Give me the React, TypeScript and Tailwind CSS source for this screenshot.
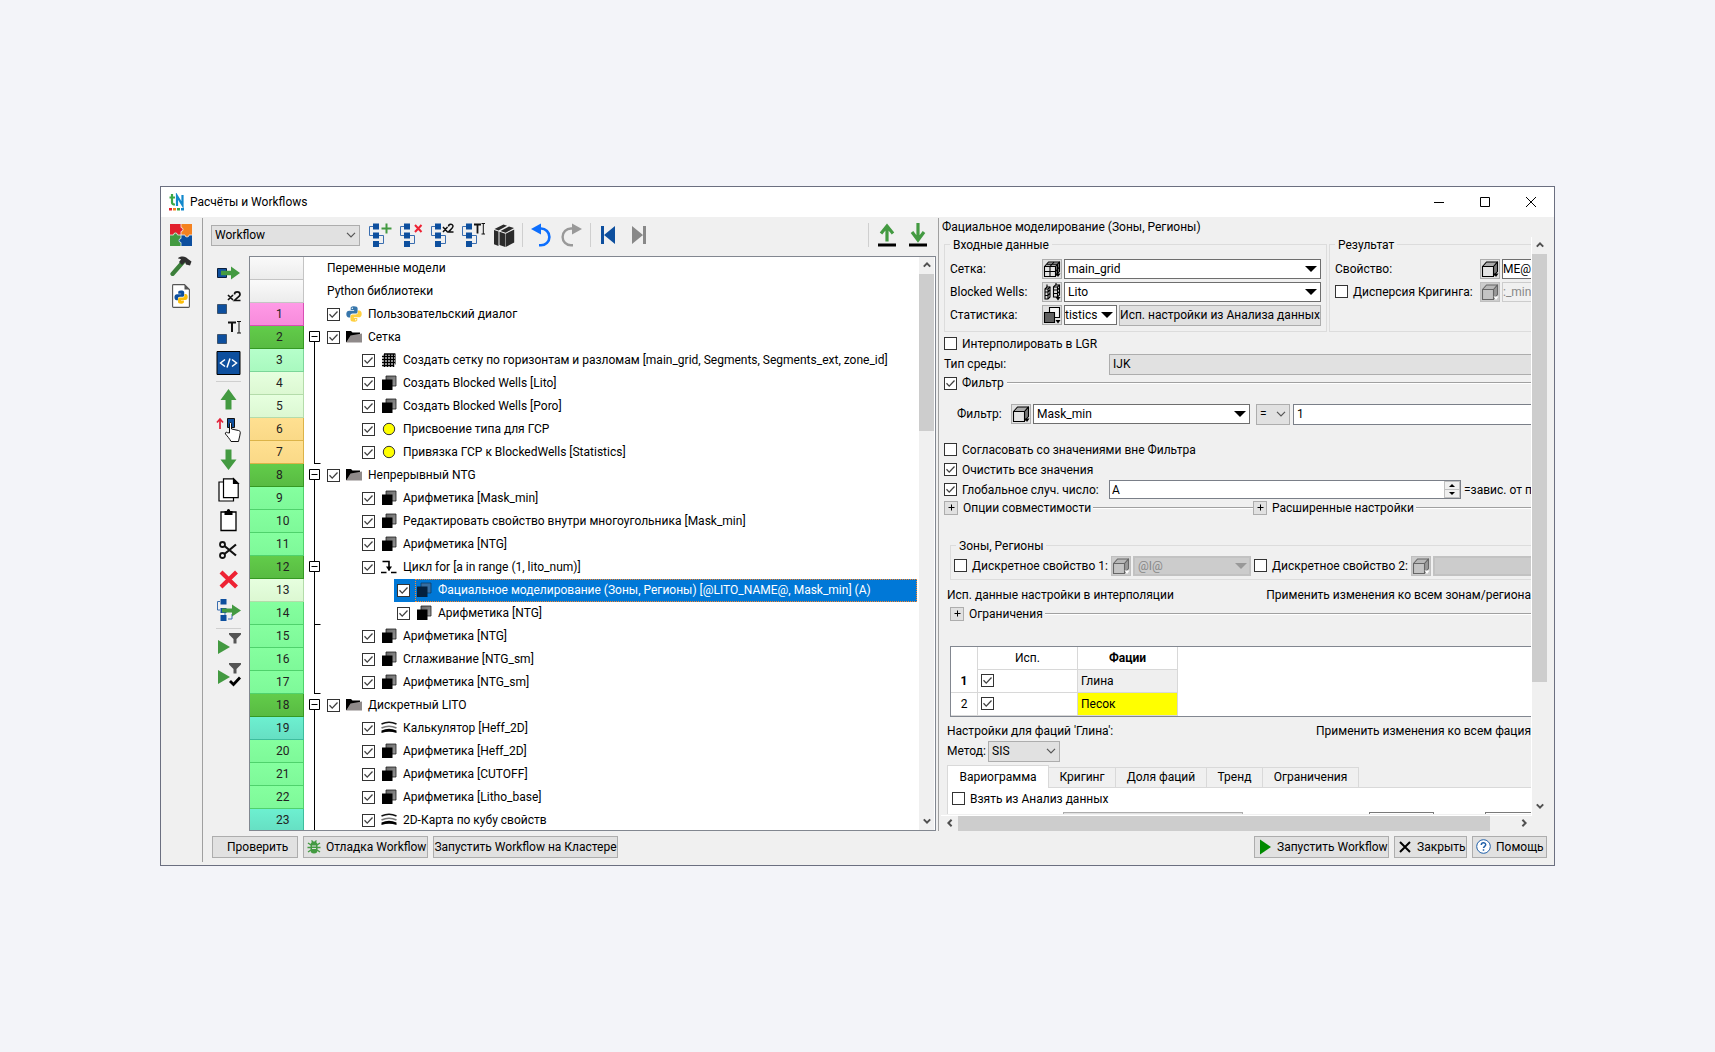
import React from "react";

type IconProps = { className?: string };

/* ---------- shared glyphs ---------- */

const Chevron = ({ className = "" }: IconProps) => (
  <svg viewBox="0 0 10 6" className={className} fill="none" stroke="#555" strokeWidth="1.2">
    <path d="M1 .8l4 4 4-4" />
  </svg>
);

const ScrollArrow = ({ d }: { d: string }) => (
  <svg viewBox="0 0 8 8" className="size-2" fill="none" stroke="#505050" strokeWidth="2">
    <path d={d} />
  </svg>
);
const UP = "M.8 5.6L4 2.4l3.2 3.2";
const DOWN = "M.8 2.4L4 5.6l3.2-3.2";
const LEFT = "M5.6 .8L2.4 4l3.2 3.2";
const RIGHT = "M2.4 .8L5.6 4 2.4 7.2";

function Check({ id, checked = false, label }: { id?: string; checked?: boolean; label?: string }) {
  return (
    <span className="grid size-[13px] shrink-0">
      <input
        id={id}
        type="checkbox"
        aria-label={label}
        defaultChecked={checked}
        className="peer col-start-1 row-start-1 size-[13px] appearance-none border border-[#333] bg-white"
      />
      <svg
        viewBox="0 0 13 13"
        className="pointer-events-none invisible col-start-1 row-start-1 size-[13px] peer-checked:visible"
        fill="none"
        stroke="#404040"
        strokeWidth="1.3"
      >
        <path d="M2.5 6.3l2.7 2.8 5.3-5.6" />
      </svg>
    </span>
  );
}

function CheckLabel({ id, checked, children }: { id: string; checked?: boolean; children: React.ReactNode }) {
  return (
    <span className="flex shrink-0 items-center gap-[5px]">
      <Check id={id} checked={checked} />
      <label htmlFor={id} className="whitespace-nowrap">
        {children}
      </label>
    </span>
  );
}

/* ---------- tree icons ---------- */

const Blocks = () => (
  <svg viewBox="0 0 16 16" className="size-4">
    <defs>
      <linearGradient id="blk" x1="0" y1="0" x2="1" y2="1">
        <stop offset="0" stopColor="#666" />
        <stop offset="1" stopColor="#999" />
      </linearGradient>
    </defs>
    <path d="M5 1h10v10H5z" fill="url(#blk)" stroke="#222" strokeWidth=".8" />
    <path d="M1 4.500h10.500V15H1z" fill="#000" />
  </svg>
);
const BlocksSelected = () => (
  <svg viewBox="0 0 16 16" className="size-4">
    <path d="M5 1h10v10H5z" fill="#376ea1" stroke="#0b3c68" strokeWidth=".8" />
    <path d="M1 4.500h10.500V15H1z" fill="#04213f" />
  </svg>
);
const Folder = () => (
  <svg viewBox="0 0 16 16" className="size-4">
    <path d="M0 2h5l1.500 1.500H14V13H0z" fill="#000" />
    <path d="M4.500 6.500L16 4.500v9H0z" fill="#8f8a8a" />
    <path d="M0 3v10l4-6.500z" fill="#000" />
  </svg>
);
const GridIcon = () => (
  <svg viewBox="0 0 16 16" className="size-4" stroke="#000" strokeWidth="1.5">
    <path d="M1 4.500h13M1 7.500h13M1 10.500h13M3.500 2v13M6.500 2v13M9.500 2v13M12.500 2v13M3 2h11M1 13.500h12" fill="none" />
    <path d="M14.500 1.500v11" stroke="#777" strokeWidth="1" />
  </svg>
);
const Dot = () => (
  <svg viewBox="0 0 16 16" className="size-4">
    <circle cx="8" cy="8" r="5.700" fill="#ffff00" stroke="#333" strokeWidth="1" />
  </svg>
);
const Loop = () => (
  <svg viewBox="0 0 16 16" className="size-4" fill="none" stroke="#000" strokeWidth="1.6">
    <path d="M1.500 2.500H8v9M0 13.500h5.500M10 13.500h5.500" />
    <path d="M5 7.500l3 4.500 3-4.500z" fill="#000" stroke="none" />
  </svg>
);
const Layers = () => (
  <svg viewBox="0 0 16 16" className="size-4" fill="none">
    <path d="M.5 4Q8 .5 15.500 4" stroke="#111" strokeWidth="1.400" />
    <path d="M.5 8Q8 4.500 15.500 8" stroke="#777" strokeWidth="1.700" />
    <path d="M.5 13V10.500Q8 7 15.500 10.500V13Q8 10.500 .5 13z" fill="#000" />
  </svg>
);
const Python = ({ className = "size-4" }: IconProps) => (
  <svg viewBox="0 0 16 16" className={className}>
    <path d="M7.900.3C5 .3 4.700 1.500 4.700 2.300v1.800h3.400v.6H3.200C1.500 4.700.3 5.900.3 8.100c0 2.300 1 3.500 2.600 3.500h1.400V9.700c0-1.300 1-2.200 2.200-2.200h3.300c1 0 1.800-.8 1.800-1.800V2.300C11.600 1 10.300.3 7.900.3z" fill="#3776ab" />
    <path d="M8.100 15.700c2.900 0 3.200-1.200 3.200-2v-1.800H7.900v-.6h4.900c1.700 0 2.900-1.200 2.900-3.400 0-2.300-1-3.500-2.600-3.500h-1.200v1.900c0 1.300-1 2.200-2.200 2.200H6.400c-1 0-1.900.8-1.900 1.800v3.400c0 1.300 1.200 2 3.600 2z" fill="#ffd040" />
    <circle cx="6.300" cy="2.300" r=".7" fill="#fff" />
    <circle cx="9.700" cy="13.700" r=".7" fill="#fff" />
  </svg>
);

/* ---------- toolbar icons ---------- */

const Flow = ({ children }: { children?: React.ReactNode }) => (
  <svg viewBox="0 0 24 24" className="size-6">
    <path d="M5 3.500H1.500v9H5M10 12.500h5.500v8h-2M6 3.500h4M6 12.500h4" fill="none" stroke="#3a6eb0" strokeWidth="1" />
    <path d="M5 .5h6v6H5zM5 9.500h6v6H5zM5 18h6v6H5z" fill="#0d4f9e" />
    <path d="M11 20.500h4" stroke="#3a6eb0" strokeWidth="1" />
    {children}
  </svg>
);
const FlowAdd = () => (
  <Flow>
    <path d="M18.500 .5v10M13.500 5.500h10" stroke="#439a41" strokeWidth="2" />
  </Flow>
);
const FlowDel = () => (
  <Flow>
    <path d="M16 2l6.500 7M22.500 2L16 9" stroke="#ee2233" strokeWidth="2" />
  </Flow>
);
const FlowX2 = () => (
  <Flow>
    <path d="M13 4l4.500 5M17.500 4L13 9M18.500 3.500C18.500.5 23 .5 23 3.300 23 5 20 7 18.500 9h5" fill="none" stroke="#111" strokeWidth="1.500" />
  </Flow>
);
const FlowRename = () => (
  <Flow>
    <path d="M13 1.500h7M16.500 1.500v9" stroke="#111" strokeWidth="1.800" />
    <path d="M20.500 .5h3.500M22.300 .5v10.500M20.500 11h3.500" stroke="#111" strokeWidth="1" />
  </Flow>
);
const Books = () => (
  <svg viewBox="0 0 24 24" className="size-6" fill="#2b2b2b">
    <path d="M2 7l4.500 1.500V23L2 21.300z" />
    <path d="M2.500 6l9-4.500 3.500 1.200L6.500 7.500z" />
    <path d="M7.500 8.800l5.800 1.900V24l-5.800-2z" />
    <path d="M8.500 8L17 3.500l5 1.500-8.300 4.700z" />
    <path d="M13.700 10.700L22.200 6.500v13L13.700 24z" />
  </svg>
);
const Undo = () => (
  <svg viewBox="0 0 24 24" className="size-6">
    <path d="M10 5.500h2a8.300 8.300 0 0 1 0 16.800h-2" fill="none" stroke="#0d6efd" strokeWidth="2.600" />
    <path d="M2 6L12 .5v11z" fill="#0d6efd" />
  </svg>
);
const Redo = () => (
  <svg viewBox="0 0 24 24" className="size-6">
    <path d="M13 5.500h-2a8.300 8.300 0 0 0 0 16.800h2" fill="none" stroke="#999" strokeWidth="2.400" />
    <path d="M22 6L12 .5v11z" fill="#999" />
  </svg>
);
const ToStart = () => (
  <svg viewBox="0 0 24 24" className="size-6" fill="#0d4f9e">
    <path d="M4 3h3v18H4zM18 3v18L7 12z" />
  </svg>
);
const ToEnd = () => (
  <svg viewBox="0 0 24 24" className="size-6" fill="#888">
    <path d="M15 3h3v18h-3zM4 3v18l11-9z" />
  </svg>
);
const Upload = () => (
  <svg viewBox="0 0 24 24" className="size-6">
    <path d="M12 18.500V3M6 10.500L12 3l6 7.500" fill="none" stroke="#439a41" strokeWidth="3.200" />
    <path d="M3 20.500h18v3H3z" />
  </svg>
);
const Download = () => (
  <svg viewBox="0 0 24 24" className="size-6">
    <path d="M12 0v16.500M6 9l6 8 6-8" fill="none" stroke="#439a41" strokeWidth="3.200" />
    <path d="M3 20.500h18v3H3z" />
  </svg>
);

/* ---------- side icons ---------- */

const side = "h-6 w-[27px] overflow-visible";
const BlockRight = () => (
  <svg viewBox="0 0 27 24" className={side}>
    <path d="M2.500 7.500h9v9h-9z" fill="#0d4f9e" stroke="#0a1e3c" />
    <path d="M6 9.800h10V5.500l9 6.500-9 6.500v-4.300H6z" fill="#439a41" />
  </svg>
);
const BlockX2 = () => (
  <svg viewBox="0 0 27 24" className={side}>
    <path d="M2.500 13.500h9v9h-9z" fill="#0d4f9e" stroke="#123" strokeWidth=".6" />
    <path d="M13 4l5 5M18 4l-5 5M19.500 3.500c0-3.400 5.500-3.400 5.500 0 0 2-4 4-5.500 6h6" fill="none" stroke="#111" strokeWidth="1.700" />
  </svg>
);
const BlockT = () => (
  <svg viewBox="0 0 27 24" className={side}>
    <path d="M2.500 13.500h9v9h-9z" fill="#0d4f9e" stroke="#123" strokeWidth=".6" />
    <path d="M13 1.500h8M17 1.500v9.500" stroke="#111" strokeWidth="2" />
    <path d="M22 .5h4M24 .5v11.500M22 12h4" stroke="#111" strokeWidth="1" />
  </svg>
);
const Code = () => (
  <svg viewBox="0 0 27 24" className={side}>
    <path d="M2 .5h23v23H2z" fill="#0d4f9e" stroke="#000" />
    <path d="M10 8.500L5.500 12l4.500 3.500M17 8.500l4.500 3.500-4.500 3.500M15 7.500l-3 9" fill="none" stroke="#fff" strokeWidth="1.500" />
  </svg>
);
const ArrowUp = () => (
  <svg viewBox="0 0 27 24" className={side} fill="#439a41">
    <path d="M13.500 1L21.500 12h-5v9.500h-6V12h-5z" />
  </svg>
);
const ArrowDown = () => (
  <svg viewBox="0 0 27 24" className={side} fill="#439a41">
    <path d="M13.500 22L21.500 11.500h-5V1.500h-6v10h-5z" />
  </svg>
);
const Hand = () => (
  <svg viewBox="0 0 27 24" className={side}>
    <path d="M12.500.5h7v9h-7z" fill="#0d4f9e" stroke="#111" />
    <path d="M5 11V1M2 4.500L5 1l3 3.500" fill="none" stroke="#e2233a" strokeWidth="1.700" />
    <path d="M14.500 15V5.500c0-1.300 2-1.300 2 0V11l7 1.500c1.300.3 1.800 1 1.800 2.200 0 2.500-1 4-1.300 6.300l-.5 2.500h-7.500c-1.500-3-3.500-5-5.500-7.500-.8-1.500 1-2.300 2-1.300z" fill="#fff" stroke="#111" />
  </svg>
);
const Copy = () => (
  <svg viewBox="0 0 27 24" className={side} fill="#fff" stroke="#000" strokeWidth="1.200">
    <path d="M4 4h14.500v19H4z" />
    <path d="M8.500 .8h10l4.700 4.700v14.200H8.500z" />
    <path d="M18.500 .8v4.700h4.700z" fill="#000" />
  </svg>
);
const Paste = () => (
  <svg viewBox="0 0 27 24" className={side}>
    <path d="M6 4h15v18.500H6z" fill="#fff" stroke="#000" strokeWidth="1.300" />
    <path d="M9.500 3h2.300c.2-2.700 3.200-2.700 3.400 0h2.300v4h-8z" />
  </svg>
);
const Scissors = () => (
  <svg viewBox="0 0 27 24" className={side} fill="none" stroke="#111" strokeWidth="1.800">
    <circle cx="7.500" cy="6.500" r="2.500" />
    <circle cx="7.500" cy="17.500" r="2.500" />
    <path d="M9.500 8L21 17.500M9.500 16L21 6.500" strokeWidth="2.200" />
  </svg>
);
const Remove = () => (
  <svg viewBox="0 0 27 24" className={side}>
    <path d="M6 4l15.500 15M21.500 4L6 19" stroke="#ee2233" strokeWidth="4.200" />
  </svg>
);
const FlowRight = () => (
  <svg viewBox="0 0 27 24" className={side}>
    <path d="M5 3.500H2.500v8.500H5M10 12.500v6M13 21h4v-5" fill="none" stroke="#3a6eb0" />
    <path d="M5.500 1h6v5.500h-6zM5.500 10h6v5h-6zM5.500 17h6v6h-6z" fill="#0d4f9e" />
    <path d="M7 10.500h10V6.500l9 6-9 6v-4H7z" fill="#439a41" />
  </svg>
);
const PlayFilter = () => (
  <svg viewBox="0 3 27 24" className={side}>
    <path d="M3 8l12 7-12 7z" fill="#439a41" />
    <path d="M14 1h12v1.500L21.500 7v4.500h-3V7L14 2.500z" fill="#555" />
  </svg>
);
const PlayFilterCheck = () => (
  <svg viewBox="0 2 27 24" className={side}>
    <path d="M3 7l12 7-12 7z" fill="#439a41" />
    <path d="M14 0h12v1.500L21.500 6v4.500h-3V6L14 1.500z" fill="#555" />
    <path d="M15 18l3.500 3.500 6.500-7" fill="none" stroke="#000" strokeWidth="2.800" />
  </svg>
);

/* ---------- left strip icons ---------- */

const Puzzle = () => (
  <svg viewBox="0 0 22 22" className="size-[22px]">
    <path d="M0 0h11v11H0z" fill="#e2202c" />
    <path d="M11 0h11v11H11z" fill="#f58220" />
    <path d="M0 11h11v11H0z" fill="#439a41" />
    <path d="M11 11h11v11H11z" fill="#0d4f9e" />
    <path d="M10 3.500h1a2 2 0 1 1 0 4h-1z" fill="#e2202c" />
    <path d="M15 10v1a2 2 0 1 0 4 0v-1z" fill="#f58220" />
    <path d="M3.500 12v-1.500a2 2 0 1 1 4 0V12z" fill="#439a41" />
    <path d="M12 14.500h-1.500a2 2 0 1 0 0 4H12z" fill="#0d4f9e" />
    <path d="M11 0v3.500a2 2 0 1 1 0 4V11M11 11v3.500a2 2 0 1 0 0 4V22M0 11h3.500a2 2 0 1 1 4 0H15a2 2 0 1 0 4 0h3" fill="none" stroke="#efefef" strokeWidth=".8" />
  </svg>
);
const Hammer = () => (
  <svg viewBox="0 0 22 20" className="h-5 w-[22px]">
    <path d="M13 6L2.500 18" stroke="#3c7f3a" strokeWidth="4.200" strokeLinecap="round" />
    <path d="M8 2C12-.5 16 .5 18 3l3.500 2.500-1.500 4-4-1-1-2.500-3 3-3-3 2-2.500c-1-1-2-1-3-1z" fill="#2f2f2f" />
  </svg>
);
const PyDoc = () => (
  <svg viewBox="0 0 18 24" className="h-6 w-[18px]">
    <path d="M.6 1.500q0-.9.9-.9h11L17.400 5.500v17q0 .9-.9.900h-15q-.9 0-.9-.9z" fill="#fff" stroke="#555" strokeWidth="1.100" />
    <path d="M12.500 .6v4.900h4.900z" fill="#555" />
    <g transform="translate(2.200 6.300) scale(.86)">
      <path d="M7.900.3C5 .3 4.700 1.500 4.700 2.300v1.800h3.400v.6H3.200C1.500 4.700.3 5.900.3 8.100c0 2.300 1 3.500 2.600 3.500h1.400V9.700c0-1.300 1-2.200 2.200-2.200h3.300c1 0 1.800-.8 1.800-1.800V2.300C11.600 1 10.300.3 7.900.3z" fill="#0d4f9e" />
      <path d="M8.100 15.700c2.900 0 3.200-1.200 3.200-2v-1.800H7.900v-.6h4.900c1.700 0 2.900-1.200 2.900-3.400 0-2.300-1-3.500-2.600-3.500h-1.200v1.900c0 1.300-1 2.200-2.200 2.200H6.400c-1 0-1.900.8-1.900 1.800v3.400c0 1.300 1.200 2 3.600 2z" fill="#fcbf0a" />
    </g>
  </svg>
);
const Logo = () => (
  <svg viewBox="0 0 16 18" className="h-[18px] w-4">
    <path d="M3 1v8.500q0 2 3 2M.5 4.500H6" fill="none" stroke="#3aa845" strokeWidth="2.200" />
    <path d="M8 13V3l5.500 9V2" fill="none" stroke="#1188cc" strokeWidth="2.200" />
    <path d="M0 15h3v2.500H0z" fill="#e2202c" />
    <path d="M4 15h3v2.500H4z" fill="#f58220" />
    <path d="M8 15h3v2.500H8z" fill="#3aa845" />
    <path d="M12 15h3v2.500h-3z" fill="#1188cc" />
  </svg>
);

/* ---------- form icons ---------- */

function Cube({ muted = false, grid = false }: { muted?: boolean; grid?: boolean }) {
  const line = muted ? "#666" : "#000";
  return (
    <svg viewBox="0 0 18 18" className="size-[18px]" stroke={line} strokeWidth="1.100" strokeLinejoin="round">
      <path d="M1.500 6.500l4-4.500h11l-3.500 4.500z" fill={muted ? "#b8b8b8" : "#aaa"} />
      <path d="M12.500 6.500l4-4.500v9.500l-4 4.500z" fill={muted ? "#999" : "#777"} />
      <path d="M1.500 6.500h11v10h-11z" fill={muted ? "#c4c4c4" : "#e4e4e4"} />
      {grid && <path d="M7 6.500v10M1.500 11.500h11M7 6.500l4-4.500M14.500 4.500V14M4 4.300h10.500M12.500 11.500l4-4.500" fill="none" />}
      <path d="M12.500 13.500h5l-2.500 3.500z" fill={muted ? "#fff" : "#000"} stroke="none" />
    </svg>
  );
}
const Wells = () => (
  <svg viewBox="0 0 18 18" className="size-[18px]" fill="#ddd" stroke="#000" strokeWidth="1.100">
    <path d="M2 6l2-2h3v10l-2 2H2zM10.500 4l2-2h4v10l-2 2h-4z" />
    <path d="M2 9h3l2-2M2 12.500h3l2-2M5 6v10M2 6h3l2-2M10.500 7h4l2-2M10.500 10.500h4l2-2M14.500 4v10M10.500 4h4l2-2M4 4V1.500M13 2V0" fill="none" />
    <path d="M12.500 14h5L15 17.500z" fill="#000" stroke="none" />
  </svg>
);
const Stats = () => (
  <svg viewBox="0 0 18 18" className="size-[18px]" stroke="#000" strokeWidth="1.100">
    <path d="M6.500 1.500h10v10h-10z" fill="#f4f4f4" />
    <path d="M1.500 6.500h10v10h-10z" fill="#606060" />
    <path d="M12.500 14h5L15 17.500z" fill="#000" stroke="none" />
  </svg>
);

/* ---------- form controls ---------- */

function IconButton({ label, muted, children }: { label: string; muted?: boolean; children: React.ReactNode }) {
  return (
    <button
      type="button"
      aria-label={label}
      disabled={muted}
      className="grid size-5 shrink-0 place-items-center border border-[#adadad] bg-[#e1e1e1] disabled:border-[#bfbfbf] disabled:bg-[#cccccc]"
    >
      {children}
    </button>
  );
}

type DarkSelectProps = { label: string; value: string; className: string; muted?: boolean; pad?: string };

function DarkSelect({ label, value, className, muted, pad = "px-[3px]" }: DarkSelectProps) {
  return (
    <span className={`grid ${className}`}>
      <select
        aria-label={label}
        disabled={muted}
        className={`col-start-1 row-start-1 h-5 w-full appearance-none border border-[#6e6e6e] bg-white disabled:border-2 disabled:border-[#c2c2c2] disabled:bg-[#cccccc] disabled:text-[#888] disabled:opacity-100 ${pad}`}
      >
        <option>{value}</option>
      </select>
      <svg viewBox="0 0 12 6" className="pointer-events-none col-start-1 row-start-1 mr-1 h-1.5 w-3 self-center justify-self-end">
        <path d="M0 0h12L6 6z" fill={muted ? "#999" : "#000"} />
      </svg>
    </span>
  );
}

function PlainSelect({ label, value, className, chevron = true }: { label: string; value: string; className: string; chevron?: boolean }) {
  return (
    <span className={`grid ${className}`}>
      <select
        aria-label={label}
        className="col-start-1 row-start-1 h-[21px] w-full appearance-none border border-[#adadad] bg-[#e1e1e1] px-[3px]"
      >
        <option>{value}</option>
      </select>
      {chevron && <Chevron className="pointer-events-none col-start-1 row-start-1 mr-1 h-1.5 w-2.5 self-center justify-self-end" />}
    </span>
  );
}

function Expander({ title }: { title: string }) {
  return (
    <span className="flex shrink-0 items-center gap-[5px]">
      <button type="button" aria-label={`Развернуть: ${title}`} className="grid size-3.5 place-items-center border border-[#adadad] bg-[#e1e1e1]">
        <svg viewBox="0 0 7 7" className="size-[7px]" stroke="#000">
          <path d="M3.500 .5v6M.5 3.500h6" />
        </svg>
      </button>
      <span className="whitespace-nowrap">{title}</span>
    </span>
  );
}

const Rule = () => <span className="h-0.5 flex-1 border-t border-b border-t-[#a0a0a0] border-b-white" />;

/* ---------- workflow tree ---------- */

const tone = {
  none: "border-[#c4c4c4] bg-linear-to-b from-[#fafafa] to-[#ececec]",
  pink: "border-[#d84fb4] bg-linear-to-b from-[#ff9ae6] to-[#f78bdc]",
  dark: "border-[#359a22] bg-linear-to-b from-[#62cc4a] to-[#58bb42]",
  mint: "border-[#7bd699] bg-linear-to-b from-[#b6ffca] to-[#a9f9bf]",
  pale: "border-[#b4dcaa] bg-linear-to-b from-[#e6ffdf] to-[#dcf8d2]",
  gold: "border-[#dcb348] bg-linear-to-b from-[#ffe091] to-[#fad987]",
  green: "border-[#4fd26c] bg-linear-to-b from-[#85ff9f] to-[#7ef999]",
  teal: "border-[#3dbd9d] bg-linear-to-b from-[#6df0d0] to-[#66dfc3]",
};
const icons = { py: Python, folder: Folder, grid: GridIcon, block: Blocks, dot: Dot, loop: Loop, layers: Layers, sel: BlocksSelected };
const indent = ["pl-[1px]", "pl-9", "pl-[71px]"];

type Row = { tone: keyof typeof tone; level: number; icon: keyof typeof icons; text: string; gutter?: "first" | "line" | "end" | "box" };

const rows: Row[] = [
  { tone: "pink", level: 0, icon: "py", text: "Пользовательский диалог" },
  { tone: "dark", level: 0, icon: "folder", text: "Сетка", gutter: "first" },
  { tone: "mint", level: 1, icon: "grid", text: "Создать сетку по горизонтам и разломам [main_grid, Segments, Segments_ext, zone_id]", gutter: "line" },
  { tone: "pale", level: 1, icon: "block", text: "Создать Blocked Wells [Lito]", gutter: "line" },
  { tone: "pale", level: 1, icon: "block", text: "Создать Blocked Wells [Poro]", gutter: "line" },
  { tone: "gold", level: 1, icon: "dot", text: "Присвоение типа для ГСР", gutter: "line" },
  { tone: "gold", level: 1, icon: "dot", text: "Привязка ГСР к BlockedWells [Statistics]", gutter: "end" },
  { tone: "dark", level: 0, icon: "folder", text: "Непрерывный NTG", gutter: "first" },
  { tone: "green", level: 1, icon: "block", text: "Арифметика [Mask_min]", gutter: "line" },
  { tone: "green", level: 1, icon: "block", text: "Редактировать свойство внутри многоугольника [Mask_min]", gutter: "line" },
  { tone: "green", level: 1, icon: "block", text: "Арифметика [NTG]", gutter: "line" },
  { tone: "dark", level: 1, icon: "loop", text: "Цикл for [a in range (1, lito_num)]", gutter: "box" },
  { tone: "pale", level: 2, icon: "sel", text: "Фациальное моделирование (Зоны, Регионы) [@LITO_NAME@, Mask_min] (A)", gutter: "line" },
  { tone: "green", level: 2, icon: "block", text: "Арифметика [NTG]", gutter: "end" },
  { tone: "green", level: 1, icon: "block", text: "Арифметика [NTG]", gutter: "line" },
  { tone: "green", level: 1, icon: "block", text: "Сглаживание [NTG_sm]", gutter: "line" },
  { tone: "green", level: 1, icon: "block", text: "Арифметика [NTG_sm]", gutter: "end" },
  { tone: "dark", level: 0, icon: "folder", text: "Дискретный LITO", gutter: "first" },
  { tone: "teal", level: 1, icon: "layers", text: "Калькулятор [Heff_2D]", gutter: "line" },
  { tone: "green", level: 1, icon: "block", text: "Арифметика [Heff_2D]", gutter: "line" },
  { tone: "green", level: 1, icon: "block", text: "Арифметика [CUTOFF]", gutter: "line" },
  { tone: "green", level: 1, icon: "block", text: "Арифметика [Litho_base]", gutter: "line" },
  { tone: "teal", level: 1, icon: "layers", text: "2D-Карта по кубу свойств", gutter: "line" },
];

function Gutter({ kind }: { kind?: Row["gutter"] }) {
  return (
    <svg viewBox="0 0 22 23" className="h-[23px] w-[22px] shrink-0" fill="none" stroke="#000">
      {kind && kind !== "first" && <path d="M10.500 0v23" />}
      {kind === "first" && <path d="M10.500 12v11" />}
      {kind === "end" && <path d="M10.500 22.500h6" />}
      {(kind === "first" || kind === "box") && (
        <>
          <path d="M5.500 5.500h10v10h-10z" fill="#fff" />
          <path d="M7.500 10.500h6" />
        </>
      )}
    </svg>
  );
}

const numberCell = "flex h-[23px] w-[54px] shrink-0 items-center border-r border-b pl-[26px] text-[#222]";

function Tree() {
  return (
    <div className="flex min-w-0 flex-1 overflow-hidden border border-[#828790] bg-white">
      <div className="-mb-0.5 min-w-0 flex-1">
        {["Переменные модели", "Python библиотеки"].map((t) => (
          <div key={t} className="flex items-center">
            <span className={`${numberCell} ${tone.none}`} />
            <span className="pl-[23px]">{t}</span>
          </div>
        ))}
        {rows.map((r, i) => {
          const Icon = icons[r.icon];
          const selected = r.icon === "sel";
          const id = `step-${i + 1}`;
          return (
            <div key={id} className="flex items-center">
              <span className={`${numberCell} ${tone[r.tone]}`}>{i + 1}</span>
              <Gutter kind={r.gutter} />
              <div className={`flex min-w-0 flex-1 items-center ${selected ? "pl-[68px]" : indent[r.level]}`}>
                <div className={`flex h-[23px] min-w-0 flex-1 items-center ${selected ? "bg-[#0078d7] pl-[3px] text-white" : ""}`}>
                  <Check id={id} checked />
                  <div className={`ml-[5px] flex h-[23px] min-w-0 flex-1 items-center gap-1.5 border border-dotted ${selected ? "border-[#ff8728]" : "border-transparent"}`}>
                    <Icon />
                    <label htmlFor={id} className="whitespace-nowrap">
                      {r.text}
                    </label>
                  </div>
                </div>
              </div>
            </div>
          );
        })}
      </div>
      <div className="ml-0.5 mr-px flex w-[15px] shrink-0 flex-col bg-[#f0f0f0]">
        <span className="grid h-[17px] place-items-center">
          <ScrollArrow d={UP} />
        </span>
        <span className="h-[157px] bg-[#cdcdcd]" />
        <span className="mt-auto grid h-[17px] place-items-center">
          <ScrollArrow d={DOWN} />
        </span>
      </div>
    </div>
  );
}

/* ---------- toolbars ---------- */

const Tool = ({ label, icon: Icon }: { label: string; icon: React.FC }) => (
  <button type="button" aria-label={label} className="grid shrink-0 place-items-center">
    <Icon />
  </button>
);
const VSep = () => <span className="-mx-px h-6 w-px bg-[#cfcfcf]" />;
const HSep = () => <span className="h-px w-[25px] shrink-0 bg-[#cfcfcf]" />;

const TopBar = () => (
  <div className="flex h-[39px] items-center px-2 pb-0.5">
    <PlainSelect label="Режим" value="Workflow" className="mr-2 w-[149px] shrink-0" />
    <div className="flex items-center gap-[7px]">
      <Tool label="Добавить" icon={FlowAdd} />
      <Tool label="Удалить" icon={FlowDel} />
      <Tool label="Дублировать" icon={FlowX2} />
      <Tool label="Переименовать" icon={FlowRename} />
      <Tool label="Библиотека" icon={Books} />
      <VSep />
      <Tool label="Отменить" icon={Undo} />
      <Tool label="Повторить" icon={Redo} />
      <VSep />
      <Tool label="В начало" icon={ToStart} />
      <Tool label="В конец" icon={ToEnd} />
    </div>
    <div className="ml-auto flex items-center gap-[7px]">
      <VSep />
      <Tool label="Выгрузить" icon={Upload} />
      <Tool label="Загрузить" icon={Download} />
    </div>
  </div>
);

const SideBar = () => (
  <div className="flex w-[46px] shrink-0 flex-col items-center gap-1.5 pt-[5px] pl-1">
    <Tool label="Вставить расчёт" icon={BlockRight} />
    <Tool label="Дублировать расчёт" icon={BlockX2} />
    <Tool label="Переименовать расчёт" icon={BlockT} />
    <Tool label="Показать код" icon={Code} />
    <HSep />
    <Tool label="Вверх" icon={ArrowUp} />
    <Tool label="Переместить" icon={Hand} />
    <Tool label="Вниз" icon={ArrowDown} />
    <Tool label="Копировать" icon={Copy} />
    <Tool label="Вставить" icon={Paste} />
    <Tool label="Вырезать" icon={Scissors} />
    <Tool label="Удалить расчёт" icon={Remove} />
    <Tool label="Экспорт" icon={FlowRight} />
    <HSep />
    <Tool label="Запустить от фильтра" icon={PlayFilter} />
    <Tool label="Запустить выбранные" icon={PlayFilterCheck} />
  </div>
);

/* ---------- settings panel ---------- */

const FIELDSET = "border border-[#dcdcdc]";
const LEGEND = "h-4 px-[3px] leading-4";

const Inputs = () => (
  <div className="ml-[3px] flex gap-0.5">
    <fieldset className={`${FIELDSET} w-[383px] min-w-0 shrink-0 px-[5px] pb-[5px]`}>
      <legend className={LEGEND}>Входные данные</legend>
      <div className="grid grid-cols-[92px_minmax(0,1fr)] items-center gap-y-[3px] pt-1.5">
        <span>Сетка:</span>
        <span className="flex gap-0.5">
          <IconButton label="Выбрать сетку">
            <Cube grid />
          </IconButton>
          <DarkSelect label="Сетка" value="main_grid" className="flex-1" />
        </span>
        <span>Blocked Wells:</span>
        <span className="flex gap-0.5">
          <IconButton label="Выбрать Blocked Wells">
            <Wells />
          </IconButton>
          <DarkSelect label="Blocked Wells" value="Lito" className="flex-1" />
        </span>
        <span>Статистика:</span>
        <span className="flex gap-0.5">
          <IconButton label="Выбрать статистику">
            <Stats />
          </IconButton>
          <DarkSelect label="Статистика" value="tistics" className="w-[54px]" pad="px-0" />
          <button type="button" className="h-[21px] flex-1 border border-[#adadad] bg-[#e1e1e1] whitespace-nowrap">
            Исп. настройки из Анализа данных
          </button>
        </span>
      </div>
    </fieldset>
    <fieldset className={`${FIELDSET} min-w-0 flex-1 border-r-0 pl-[5px]`}>
      <legend className={LEGEND}>Результат</legend>
      <div className="grid grid-cols-[145px_1fr] items-center gap-y-[3px] pt-1.5">
        <label htmlFor="prop">Свойство:</label>
        <span className="flex gap-0.5">
          <IconButton label="Выбрать свойство">
            <Cube />
          </IconButton>
          <input id="prop" defaultValue="ME@" className="h-5 w-0 flex-1 border border-r-0 border-[#6e6e6e] bg-white" />
        </span>
        <CheckLabel id="krig">Дисперсия Кригинга:</CheckLabel>
        <span className="flex gap-0.5">
          <IconButton label="Выбрать дисперсию" muted>
            <Cube muted />
          </IconButton>
          <input aria-label="Дисперсия Кригинга" disabled defaultValue=":_min" className="h-5 w-0 flex-1 border border-r-0 border-[#cccccc] text-[#888]" />
        </span>
      </div>
    </fieldset>
  </div>
);

const cell = "border-r border-b border-[#d8d8d8] font-normal";

const Facies = () => (
  <div className="mt-[25px] ml-[9px] border border-r-0 border-[#828790] bg-white">
    <table className="w-[227px] table-fixed border-separate border-spacing-0">
      <thead>
        <tr className="h-[23px]">
          <th className="w-[27px] border-r border-[#d8d8d8] p-0" />
          <th className={`${cell} w-[100px] p-0`}>Исп.</th>
          <th className="w-[100px] border-r border-b border-[#d8d8d8] p-0 font-bold">Фации</th>
        </tr>
      </thead>
      <tbody>
        <tr className="h-[23px]">
          <th className="border-r border-b border-[#d8d8d8] p-0 font-bold">1</th>
          <td className={`${cell} px-[3px] py-0`}>
            <Check checked label="Использовать: Глина" />
          </td>
          <td className={`${cell} bg-[#efefef] px-[3px] py-0`}>Глина</td>
        </tr>
        <tr className="h-[23px]">
          <th className={`${cell} p-0`}>2</th>
          <td className={`${cell} px-[3px] py-0`}>
            <Check checked label="Использовать: Песок" />
          </td>
          <td className={`${cell} bg-[#ffff00] px-[3px] py-0`}>Песок</td>
        </tr>
      </tbody>
    </table>
  </div>
);

const TABS = [
  ["Кригинг", "w-[67px]"],
  ["Доля фаций", "w-[91px]"],
  ["Тренд", "w-14"],
  ["Ограничения", "w-24"],
];

const Tabs = () => (
  <div className="mt-[3px] ml-1.5">
    <div role="tablist" className="flex items-end">
      <button type="button" role="tab" aria-selected="true" className="h-[23px] w-[102px] border border-b-0 border-[#d9d9d9] bg-white">
        Вариограмма
      </button>
      {TABS.map(([name, width]) => (
        <button key={name} type="button" role="tab" aria-selected="false" className={`h-[21px] shrink-0 border border-l-0 border-[#d9d9d9] ${width}`}>
          {name}
        </button>
      ))}
      <span className="flex-1 border-b border-[#d9d9d9]" />
    </div>
    <div className="h-[26px] border-l border-[#d9d9d9] bg-white pt-[3px] pl-1">
      <CheckLabel id="from-analysis">Взять из Анализ данных</CheckLabel>
      <div className="mt-[5px] flex">
        <span className="ml-[111px] h-0.5 w-[180px] shrink-0 border border-b-0 border-[#adadad] bg-[#e1e1e1]" />
        <span className="ml-[126px] h-0.5 w-[65px] shrink-0 border border-b-0 border-[#7a7a7a]" />
        <span className="ml-[51px] h-0.5 flex-1 border border-r-0 border-b-0 border-[#7a7a7a]" />
      </div>
    </div>
  </div>
);

const Form = () => (
  <div className="min-w-0 flex-1 overflow-hidden">
    <Inputs />
    <div className="mt-0.5 ml-[3px] flex h-5 items-center">
      <CheckLabel id="lgr">Интерполировать в LGR</CheckLabel>
    </div>
    <div className="ml-[3px] flex items-center">
      <span className="w-[165px] shrink-0">Тип среды:</span>
      <PlainSelect label="Тип среды" value="IJK" className="-mr-1 flex-1" chevron={false} />
    </div>
    <div className="mt-px ml-[3px] flex h-[15px] items-center gap-[3px]">
      <CheckLabel id="filter" checked>
        Фильтр
      </CheckLabel>
      <Rule />
    </div>
    <div className="mt-[13px] ml-4 flex items-center">
      <span className="w-[54px] shrink-0">Фильтр:</span>
      <IconButton label="Выбрать фильтр">
        <Cube />
      </IconButton>
      <DarkSelect label="Фильтр" value="Mask_min" className="ml-0.5 w-[217px] shrink-0" />
      <PlainSelect label="Условие" value="=" className="ml-1.5 w-[34px] shrink-0" />
      <input aria-label="Значение фильтра" defaultValue="1" className="ml-[3px] h-[21px] w-0 flex-1 border border-r-0 border-[#7a7f88] bg-white px-[3px]" />
    </div>
    <div className="mt-[15px] ml-[3px] flex h-5 items-center">
      <CheckLabel id="agree">Согласовать со значениями вне Фильтра</CheckLabel>
    </div>
    <div className="ml-[3px] flex h-5 items-center">
      <CheckLabel id="clear" checked>
        Очистить все значения
      </CheckLabel>
    </div>
    <div className="ml-[3px] flex h-5 items-center">
      <span className="w-[165px] shrink-0">
        <CheckLabel id="seed" checked>
          Глобальное случ. число:
        </CheckLabel>
      </span>
      <span className="flex h-[19px] w-[352px] shrink-0 border border-[#7a7f88] bg-white">
        <input aria-label="Глобальное случайное число" defaultValue="A" className="h-full min-w-0 flex-1 px-0.5" />
        <span className="flex w-4 flex-col">
          <button type="button" aria-label="Увеличить" className="grid flex-1 place-items-center border border-[#c0c0c0] bg-[#efefef]">
            <svg viewBox="0 0 6 3" className="h-[3px] w-1.5">
              <path d="M0 3h6L3 0z" />
            </svg>
          </button>
          <button type="button" aria-label="Уменьшить" className="grid flex-1 place-items-center border border-t-0 border-[#c0c0c0] bg-[#efefef]">
            <svg viewBox="0 0 6 3" className="h-[3px] w-1.5">
              <path d="M0 0h6L3 3z" />
            </svg>
          </button>
        </span>
      </span>
      <span className="ml-[3px] whitespace-nowrap">=завис. от п</span>
    </div>
    <div className="mt-px ml-[3px] flex h-3.5 items-center">
      <span className="flex w-[309px] shrink-0 items-center gap-0.5">
        <Expander title="Опции совместимости" />
        <Rule />
      </span>
      <span className="flex flex-1 items-center gap-0.5">
        <Expander title="Расширенные настройки" />
        <Rule />
      </span>
    </div>
    <fieldset className={`${FIELDSET} mt-[23px] ml-[9px] border-r-0 pb-[3px]`}>
      <legend className={`${LEGEND} ml-[5px]`}>Зоны, Регионы</legend>
      <div className="flex items-center pt-0.5 pl-[3px]">
        <span className="w-[157px] shrink-0">
          <CheckLabel id="disc1">Дискретное свойство 1:</CheckLabel>
        </span>
        <IconButton label="Выбрать свойство 1" muted>
          <Cube muted />
        </IconButton>
        <DarkSelect label="Дискретное свойство 1" value="@I@" className="ml-0.5 w-[118px] shrink-0" muted />
        <span className="ml-[3px] w-[157px] shrink-0">
          <CheckLabel id="disc2">Дискретное свойство 2:</CheckLabel>
        </span>
        <IconButton label="Выбрать свойство 2" muted>
          <Cube muted />
        </IconButton>
        <span className="ml-0.5 h-5 flex-1 border-2 border-r-0 border-[#c2c2c2] bg-[#cccccc]" />
      </div>
    </fieldset>
    <div className="mt-1.5 ml-1.5 flex h-[18px] items-center justify-between whitespace-nowrap">
      <span>Исп. данные настройки в интерполяции</span>
      <span>Применить изменения ко всем зонам/региона</span>
    </div>
    <div className="mt-[3px] ml-[9px] flex h-3.5 items-center gap-0.5">
      <Expander title="Ограничения" />
      <Rule />
    </div>
    <Facies />
    <div className="mt-[5px] ml-1.5 flex h-[18px] items-center justify-between whitespace-nowrap">
      <span>Настройки для фаций 'Глина':</span>
      <span>Применить изменения ко всем фация</span>
    </div>
    <div className="mt-px ml-1.5 flex items-center">
      <span className="w-[41px] shrink-0">Метод:</span>
      <PlainSelect label="Метод" value="SIS" className="w-[72px]" />
    </div>
    <Tabs />
  </div>
);

const Settings = () => (
  <section className="mt-px mr-[7px] flex min-w-0 flex-[606] flex-col overflow-hidden border-l border-[#a0a0a0] pl-0.5">
    <h2 className="h-[19px] pl-px leading-[18px]">Фациальное моделирование (Зоны, Регионы)</h2>
    <div className="flex flex-1">
      <Form />
      <div className="flex w-4 shrink-0 flex-col border-l border-white bg-[#f0f0f0]">
        <span className="grid h-[17px] place-items-center">
          <ScrollArrow d={UP} />
        </span>
        <span className="h-[428px] bg-[#cdcdcd]" />
        <span className="mt-auto grid h-[17px] place-items-center">
          <ScrollArrow d={DOWN} />
        </span>
      </div>
    </div>
    <div className="mr-[15px] flex h-4 border-t border-white">
      <span className="grid w-[17px] place-items-center">
        <ScrollArrow d={LEFT} />
      </span>
      <span className="w-[90%] bg-[#cdcdcd]" />
      <span className="ml-auto grid w-[17px] place-items-center">
        <ScrollArrow d={RIGHT} />
      </span>
    </div>
  </section>
);

/* ---------- footer ---------- */

const footBtn = "flex h-[22px] shrink-0 items-center border border-[#adadad] bg-[#e1e1e1] whitespace-nowrap";

const Footer = () => (
  <footer className="flex gap-[5px] pt-[5px] pr-[7px] pb-[7px] pl-[9px]">
    <button type="button" className={`${footBtn} w-[86px] pl-3.5`}>
      Проверить
    </button>
    <button type="button" className={`${footBtn} w-[125px] gap-[5px] pl-[3px]`}>
      <svg viewBox="0 0 14 14" className="size-3.5 shrink-0" fill="#439a41" stroke="#439a41">
        <path d="M3.500 5a3.500 3.500 0 0 1 7 0v5a3.500 3.500 0 0 1-7 0z" stroke="none" />
        <path d="M1 3l3 2M13 3l-3 2M.5 7.500h13M1 12l3-2M13 12l-3-2M4.500.5L6 2M9.500.5L8 2" fill="none" strokeWidth="1.400" />
        <path d="M5 6h4M5 8.500h4" stroke="#e1e1e1" />
      </svg>
      Отладка Workflow
    </button>
    <button type="button" className={`${footBtn} w-[185px] justify-center`}>
      Запустить Workflow на Кластере
    </button>
    <span className="flex-1" />
    <button type="button" className={`${footBtn} w-[135px] gap-1.5 pl-[5px]`}>
      <svg viewBox="0 0 11 16" className="h-4 w-[11px] shrink-0" fill="#008a00">
        <path d="M0 .5L11 8 0 15.500z" />
      </svg>
      Запустить Workflow
    </button>
    <button type="button" className={`${footBtn} w-[73px] gap-1.5 pl-1`}>
      <svg viewBox="0 0 12 12" className="size-3 shrink-0" stroke="#000" strokeWidth="2">
        <path d="M1 1l10 10M11 1L1 11" />
      </svg>
      Закрыть
    </button>
    <button type="button" className={`${footBtn} w-[75px] gap-[5px] pl-[3px]`}>
      <svg viewBox="0 0 15 15" className="size-[15px] shrink-0" fill="none" stroke="#1f5fa8">
        <circle cx="7.500" cy="7.500" r="6.800" fill="#fff" />
        <path d="M5.300 6c0-3 4.400-2.800 4.400-.3 0 1.600-2.200 1.600-2.200 3.400M7.500 10.300v1.500" strokeWidth="1.500" />
      </svg>
      Помощь
    </button>
  </footer>
);

export default function App() {
  return (
    <div className="flex min-h-screen items-center bg-[#f3f4f9] px-40 pb-px font-[Roboto,'Noto_Sans',sans-serif] text-[12px] leading-4 text-black">
      <main className="w-full border border-[#6b6f80] bg-[#f0f0f0]">
        <header className="flex h-[30px] items-center bg-white pl-2">
          <Logo />
          <h1 className="ml-[5px]">Расчёты и Workflows</h1>
          <div className="ml-auto flex">
            <button type="button" aria-label="Свернуть" className="grid h-[30px] w-[46px] place-items-center">
              <svg viewBox="0 0 10 10" className="size-2.5" stroke="#000">
                <path d="M0 5.500h10" />
              </svg>
            </button>
            <button type="button" aria-label="Развернуть" className="grid h-[30px] w-[46px] place-items-center">
              <svg viewBox="0 0 10 10" className="size-2.5" fill="none" stroke="#000">
                <path d="M.5.5h9v9h-9z" />
              </svg>
            </button>
            <button type="button" aria-label="Закрыть окно" className="grid h-[30px] w-[46px] place-items-center">
              <svg viewBox="0 0 10 10" className="size-2.5" stroke="#000">
                <path d="M0 0l10 10M10 0L0 10" />
              </svg>
            </button>
          </div>
        </header>
        <div className="flex">
          <nav aria-label="Разделы" className="mt-px mb-[3px] flex w-[42px] shrink-0 flex-col items-center border-r border-[#a0a0a0] pt-1.5 pr-0.5">
            <Tool label="Расчёты" icon={Puzzle} />
            <span className="h-2.5" />
            <Tool label="Инструменты" icon={Hammer} />
            <span className="h-2" />
            <Tool label="Скрипты Python" icon={PyDoc} />
          </nav>
          <div className="min-w-0 flex-1">
            <div className="flex">
              <section className="flex min-w-0 flex-[735] flex-col">
                <TopBar />
                <div className="flex flex-1 pr-0.5">
                  <SideBar />
                  <Tree />
                </div>
              </section>
              <Settings />
            </div>
            <Footer />
          </div>
        </div>
      </main>
    </div>
  );
}
